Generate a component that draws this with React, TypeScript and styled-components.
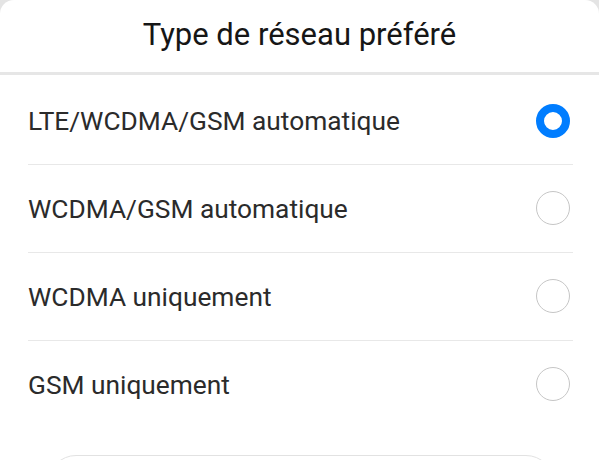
import React, { useState } from "react";
import styled, { createGlobalStyle } from "styled-components";

const GlobalStyle = createGlobalStyle`
  html, body {
    margin: 0;
    padding: 0;
    background: #e4e4e4;
    font-family: Roboto, "Noto Sans", "Liberation Sans", sans-serif;
  }
`;

const options = [
  "LTE/WCDMA/GSM automatique",
  "WCDMA/GSM automatique",
  "WCDMA uniquement",
  "GSM uniquement",
];

const App: React.FunctionComponent<{}> = () => {
  const [selected, setSelected] = useState(0);

  return (
    <>
      <GlobalStyle />
      <SheetStyled>
        <HeaderStyled>
          <TitleStyled>Type de réseau préféré</TitleStyled>
        </HeaderStyled>
        <ListStyled>
          {options.map((label, i) => (
            <RowStyled key={label} onClick={() => setSelected(i)}>
              <RowInnerStyled last={i === options.length - 1}>
                <LabelStyled>{label}</LabelStyled>
                <RadioStyled checked={i === selected} />
              </RowInnerStyled>
            </RowStyled>
          ))}
        </ListStyled>
        <FooterStyled>
          {/* only the top edge of the cancel button shows in the crop */}
          <CancelButtonStyled aria-label="Annuler" />
        </FooterStyled>
      </SheetStyled>
    </>
  );
};

const SheetStyled = styled.div`
  width: 599px;
  height: 460px;
  overflow: hidden;
  background: #ffffff;
  border-radius: 14px 14px 0 0;
  display: flex;
  flex-direction: column;
  & > * {
    flex-shrink: 0;
  }
`;

const HeaderStyled = styled.div`
  height: 72px;
  display: flex;
  align-items: center;
  justify-content: center;
  border-bottom: 3px solid #e6e6e6;
`;

const TitleStyled = styled.h1`
  margin: -3px 0 0;
  font-size: 31px;
  font-weight: 400;
  color: #161616;
`;

const ListStyled = styled.div`
  display: flex;
  flex-direction: column;
  padding-top: 2px;
`;

const RowStyled = styled.div`
  padding: 0 26px 0 28px;
  cursor: pointer;
`;

const RowInnerStyled = styled.div<{ last?: boolean }>`
  height: 87px;
  display: flex;
  align-items: center;
  justify-content: space-between;
  border-bottom: 1px solid ${p => (p.last ? "transparent" : "#e8e8e8")};
`;

const LabelStyled = styled.span`
  font-size: 26.3px;
  color: #2b2b2b;
  margin-top: 1px;
`;

const RadioStyled = styled.span<{ checked?: boolean }>`
  box-sizing: border-box;
  width: 34px;
  height: 34px;
  border-radius: 50%;
  margin-right: 3px;
  margin-top: ${p => (p.checked ? "0" : "-1px")};
  border: ${p => (p.checked ? "8.5px solid #007dff" : "1.6px solid #c6c6c6")};
  background: #ffffff;
`;

const FooterStyled = styled.div`
  padding: 26px 45px 0 48px;
`;

const CancelButtonStyled = styled.button`
  display: block;
  width: 100%;
  height: 56px;
  border: 1.5px solid #e2e2e2;
  border-radius: 28px;
  background: #ffffff;
`;

export default App;
